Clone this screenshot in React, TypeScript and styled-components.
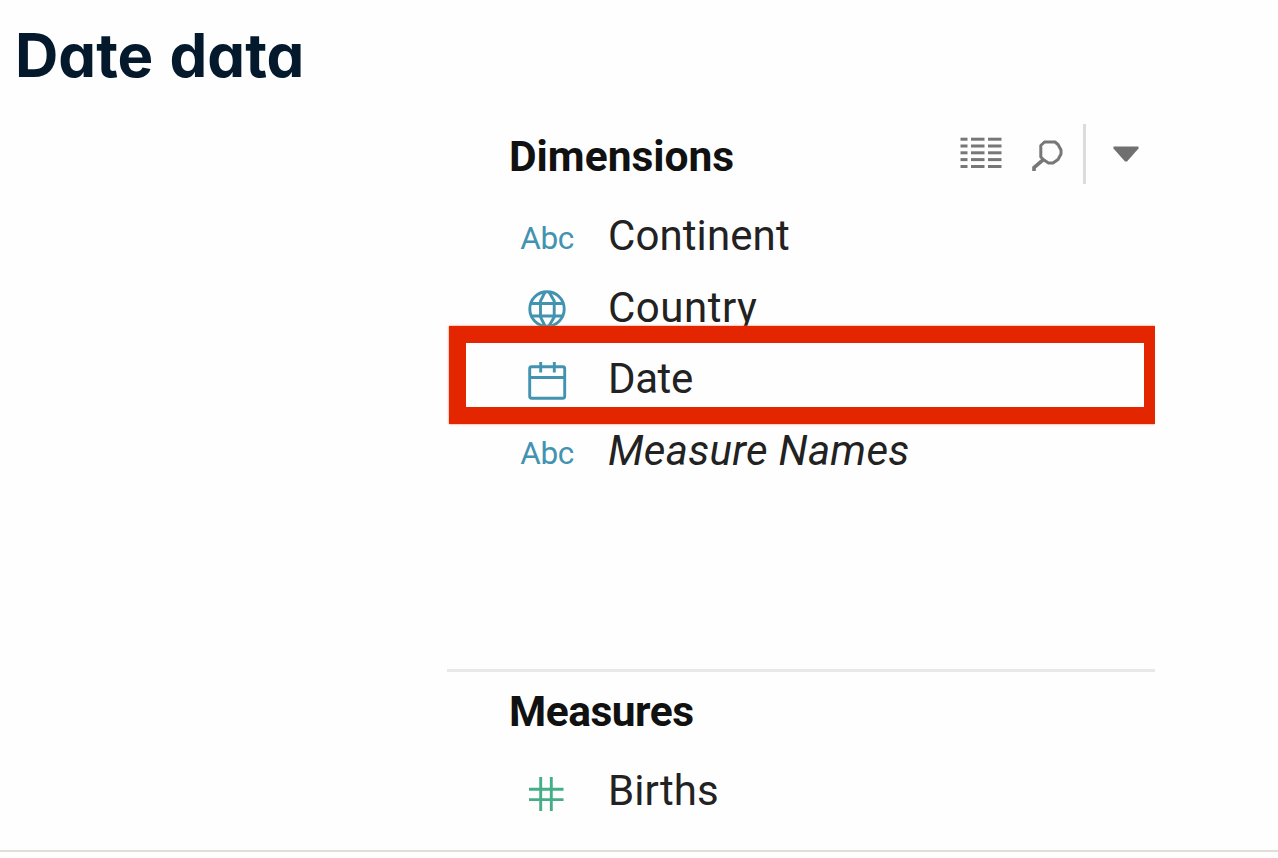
import React from "react";
import styled, { createGlobalStyle } from "styled-components";

const GlobalStyle = createGlobalStyle`
  * { box-sizing: border-box; }
  body { margin: 0; background: #fefefe; }
`;

const Slide = styled.main`
  display: flex;
  flex-direction: column;
  width: 1278px;
  height: 852px;
  background: #fefefe;
  border-bottom: 2px solid #dfdfd8;
  overflow: hidden;
`;

const Title = styled.h1`
  margin: 0;
  padding: 15px 0 0 15px;
  height: 124px;
  font: 650 60px/80px Inter, sans-serif;
  font-feature-settings: "cv11";
  letter-spacing: 0;
  word-spacing: 2px;
  color: #05192d;
`;

const Panel = styled.section`
  width: 708px;
  margin-left: 447px;
  font-family: Roboto, sans-serif;
`;

const Group = styled.div<{ $height: number; $top?: number }>`
  height: ${(p) => p.$height}px;
  padding-top: ${(p) => p.$top ?? 0}px;
`;

const GroupHeader = styled.header`
  display: flex;
  align-items: flex-start;
  justify-content: space-between;
  height: 76px;
  padding-left: 62px;
`;

const GroupName = styled.h2<{ $spacing: number }>`
  margin: 0;
  font-size: 42.5px;
  line-height: 65px;
  font-weight: 700;
  letter-spacing: ${(p) => p.$spacing}px;
  color: #111;
`;

const Tools = styled.div`
  display: flex;
  align-items: center;
  height: 60px;
  padding-right: 16px;
`;

const ToolDivider = styled.span`
  width: 3px;
  height: 60px;
  margin: 0 27px 0 20px;
  background: #dcdcdc;
`;

const Row = styled.div`
  position: relative;
  display: flex;
  align-items: center;
  height: 71.5px;
`;

const IconCell = styled.div`
  display: flex;
  justify-content: center;
  width: 52px;
  margin: 4px 35px 0 74px;
`;

const TypeText = styled.span`
  padding-top: 3px;
  font-size: 31.5px;
  line-height: 36px;
  letter-spacing: -0.4px;
  color: #4293b0;
`;

const FieldName = styled.span<{ $italic?: boolean; $spacing?: number }>`
  font-size: 42px;
  line-height: 71.5px;
  white-space: nowrap;
  font-style: ${(p) => (p.$italic ? "italic" : "normal")};
  letter-spacing: ${(p) => p.$spacing ?? 0}px;
  color: #222;
`;

const Highlight = styled.div`
  position: absolute;
  top: -17px;
  left: 2px;
  right: 0;
  height: 98px;
  border: 17px solid #e32600;
  border-right-width: 11px;
  box-shadow: 0 0 2px #f0704f;
  clip-path: inset(-3px 0 -3px -3px);
`;

const Separator = styled.hr`
  height: 3px;
  margin: 0;
  border: 0;
  background: #e8e8e8;
`;

const GridIcon = () => (
  <svg width="42" height="34" viewBox="0 0 42 34" fill="#777">
    {[0.7, 7.5, 14.3, 21.1, 28].map((y) => (
      <g key={y}>
        <rect x="0.5" y={y} width="7" height="3" />
        <rect x="11" y={y} width="13.5" height="3" />
        <rect x="28" y={y} width="13.5" height="3" />
      </g>
    ))}
  </svg>
);

const SearchIcon = styled.svg`
  margin-left: 29px;
`;

const Search = () => (
  <SearchIcon width="32" height="34" viewBox="0 0 32 34" fill="none" stroke="#777" strokeWidth="3">
    <path d="M13.5 5H24L27 7.5L30 13V17L27 22.5L22 26H17.5L13 23L9.8 20V8.5Z" strokeLinejoin="round" />
    <path d="M12.5 22.5L3 30.5V34" strokeWidth="3.6" />
  </SearchIcon>
);

const Arrow = () => (
  <svg width="26" height="16" viewBox="0 0 26 16">
    <path d="M0.5 0.5H25.5V2.5L14 15.5H12L0.5 2.5Z" fill="#707070" />
  </svg>
);

const Globe = () => (
  <svg width="40" height="38" viewBox="0 0 40 38" fill="none" stroke="#4293b0" strokeWidth="2.9">
    <circle cx="20" cy="19" r="17.2" />
    <path d="M3.5 13.5H36.5M3.5 26H36.5" />
    <path d="M18 2L13.5 11V27L18 36M22 2L27.2 11V27L22 36" />
  </svg>
);

const Calendar = () => (
  <svg width="40" height="40" viewBox="0 0 40 40" fill="none" stroke="#4293b0" strokeWidth="2.9">
    <rect x="2.7" y="5.7" width="35" height="31.5" rx="2" />
    <path d="M2.7 16.5H37.7M13.7 1V11.5M27.3 1V11.5" />
  </svg>
);

const Hash = () => (
  <svg width="40" height="36" viewBox="0 0 40 36" fill="none" stroke="#45ae87" strokeWidth="2.9">
    <path d="M2 14.3H36.5M2 24.6H36.5M13.7 2V36M24.3 2V36" />
  </svg>
);

export default function App() {
  return (
    <>
      <GlobalStyle />
      <Slide>
        <Title>Date data</Title>
        <Panel>
          <Group $height={544.5}>
            <GroupHeader>
              <GroupName $spacing={0}>Dimensions</GroupName>
              <Tools>
                <GridIcon />
                <Search />
                <ToolDivider />
                <Arrow />
              </Tools>
            </GroupHeader>
            <Row>
              <IconCell><TypeText>Abc</TypeText></IconCell>
              <FieldName $spacing={0.1}>Continent</FieldName>
            </Row>
            <Row>
              <IconCell><Globe /></IconCell>
              <FieldName $spacing={0.5}>Country</FieldName>
            </Row>
            <Row>
              <IconCell><Calendar /></IconCell>
              <FieldName $spacing={-0.4}>Date</FieldName>
              <Highlight />
            </Row>
            <Row>
              <IconCell><TypeText>Abc</TypeText></IconCell>
              <FieldName $italic $spacing={0.3}>Measure Names</FieldName>
            </Row>
          </Group>
          <Separator />
          <Group $height={178} $top={7.5}>
            <GroupHeader>
              <GroupName $spacing={-0.5}>Measures</GroupName>
            </GroupHeader>
            <Row>
              <IconCell><Hash /></IconCell>
              <FieldName $spacing={0.1}>Births</FieldName>
            </Row>
          </Group>
        </Panel>
      </Slide>
    </>
  );
}
